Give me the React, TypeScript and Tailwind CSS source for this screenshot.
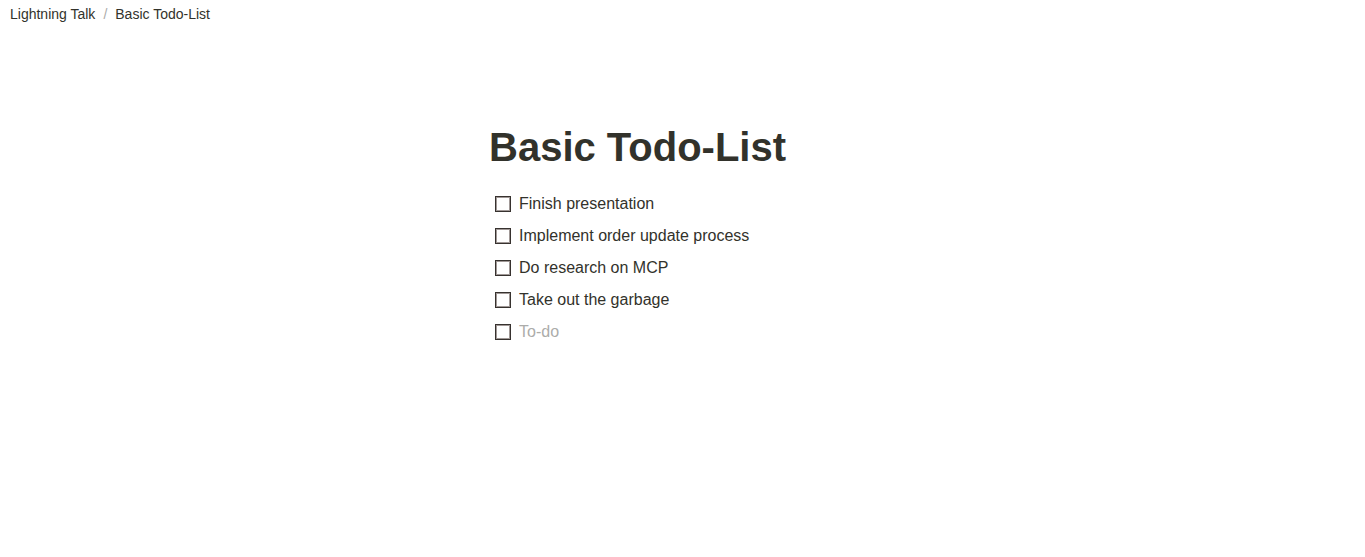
const todos = [
  'Finish presentation',
  'Implement order update process',
  'Do research on MCP',
  'Take out the garbage',
  '',
];

function TodoRow({ text }: { text: string }) {
  return (
    <li className="flex h-8 items-center">
      <label className="flex items-center gap-2">
        <input
          type="checkbox"
          className="size-4 shrink-0 appearance-none border border-[#37322f] inset-shadow-[0_0_0_1px_#a09896] checked:bg-[#2383e2]"
        />
        <span className={text ? 'leading-6' : 'leading-6 text-[#acacaa]'}>{text || 'To-do'}</span>
      </label>
    </li>
  );
}

export default function App() {
  return (
    <div className="min-h-screen bg-white font-['Liberation_Sans',Arial,sans-serif] text-[#32322b]">
      <nav aria-label="Breadcrumb" className="flex items-center gap-2 px-[10px] pt-1 text-sm">
        <a href="#lightning-talk">Lightning Talk</a>
        <span className="text-[#acacaa]">/</span>
        <a href="#basic-todo-list">Basic Todo-List</a>
      </nav>
      <main className="mx-auto w-full max-w-[387px] pt-[99px]">
        <h1 className="text-[40px] leading-12 font-bold">Basic Todo-List</h1>
        <ul className="mt-[17px] pl-[6px] text-base">
          {todos.map((text, i) => (
            <TodoRow key={i} text={text} />
          ))}
        </ul>
      </main>
    </div>
  );
}
